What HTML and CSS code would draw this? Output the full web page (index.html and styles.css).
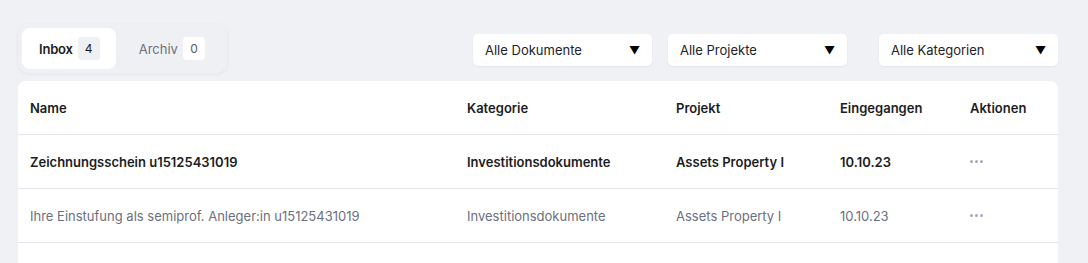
FILE: index.html
```html
<!DOCTYPE html>
<html lang="de">
<head>
    <meta charset="UTF-8">
    <title>Dokumente</title>
    <link rel="stylesheet" href="styles.css">
</head>
<body>
    <div class="page">
        <div class="toolbar">
            <div class="tabs">
                <div class="tab active">Inbox <span class="count">4</span></div>
                <div class="tab">Archiv <span class="count">0</span></div>
            </div>
            <div class="filters">
                <div class="select">Alle Dokumente <span class="caret">&#9660;</span></div>
                <div class="select">Alle Projekte <span class="caret">&#9660;</span></div>
                <div class="select wide-gap">Alle Kategorien <span class="caret">&#9660;</span></div>
            </div>
        </div>

        <div class="table">
            <div class="row head">
                <div>Name</div>
                <div>Kategorie</div>
                <div>Projekt</div>
                <div>Eingegangen</div>
                <div>Aktionen</div>
            </div>
            <div class="row unread">
                <div>Zeichnungsschein u15125431019</div>
                <div>Investitionsdokumente</div>
                <div>Assets Property I</div>
                <div>10.10.23</div>
                <div class="dots"><span></span><span></span><span></span></div>
            </div>
            <div class="row">
                <div>Ihre Einstufung als semiprof. Anleger:in u15125431019</div>
                <div>Investitionsdokumente</div>
                <div>Assets Property I</div>
                <div>10.10.23</div>
                <div class="dots"><span></span><span></span><span></span></div>
            </div>
            <div class="row empty"></div>
        </div>
    </div>
</body>
</html>
```

FILE: styles.css
```css
* {
    margin: 0;
    padding: 0;
    box-sizing: border-box;
}

body {
    font-family: Inter, "Noto Sans", sans-serif;
    font-size: 13px;
    background: #f0f1f5;
    color: #1c1d22;
    overflow: hidden;
}

.page {
    width: 1040px;
    margin-left: 18px;
    padding-top: 24px;
}

.toolbar {
    display: flex;
    justify-content: space-between;
    align-items: center;
    margin-bottom: 8px;
}

.tabs {
    display: flex;
    padding: 4px;
    gap: 4px;
    background: #eff0f4;
    border-radius: 10px;
    box-shadow: 0 1px 4px rgba(30, 35, 60, 0.06);
}

.tab {
    display: flex;
    align-items: center;
    gap: 5px;
    height: 41px;
    padding: 0 17px 0 17px;
    color: #6b7080;
    border-radius: 8px;
}

.tab.active {
    background: #fff;
    color: #1c1d22;
    font-weight: 600;
    letter-spacing: -0.2px;
    padding-right: 16px;
}

.tab + .tab {
    padding-left: 19px;
    padding-right: 18px;
}

.count {
    display: inline-flex;
    align-items: center;
    justify-content: center;
    width: 22px;
    height: 23px;
    border-radius: 4px;
    background: #fff;
    color: #555a66;
    font-weight: 400;
    font-size: 12px;
    letter-spacing: 0;
}

.tab.active .count {
    background: #eef0f4;
    color: #1c1d22;
}

.filters {
    display: flex;
    gap: 16px;
    margin-top: 2px;
}

.select {
    display: flex;
    justify-content: space-between;
    align-items: center;
    width: 179px;
    height: 32px;
    padding: 0 12px;
    background: #fff;
    border-radius: 5px;
    box-shadow: 0 1px 2px rgba(30, 35, 60, 0.06);
    color: #222328;
}

.select.wide-gap {
    margin-left: 16px;
}

.caret {
    font-size: 11px;
    color: #000;
}

.table {
    background: #fff;
    border-radius: 8px 8px 0 0;
}

.row {
    display: grid;
    grid-template-columns: 437px 209px 164px 130px 1fr;
    align-items: center;
    height: 54px;
    padding-left: 12px;
    border-bottom: 1px solid #e3e5ea;
    color: #6b7080;
}

.row.head {
    color: #1c1d22;
    font-weight: 600;
}

.row.unread {
    color: #1c1d22;
    font-weight: 600;
}

.row.empty {
    border-bottom: none;
}

.dots {
    display: flex;
    gap: 2px;
}

.dots span {
    width: 3px;
    height: 3px;
    border-radius: 50%;
    background: #a5a9b8;
}
```
